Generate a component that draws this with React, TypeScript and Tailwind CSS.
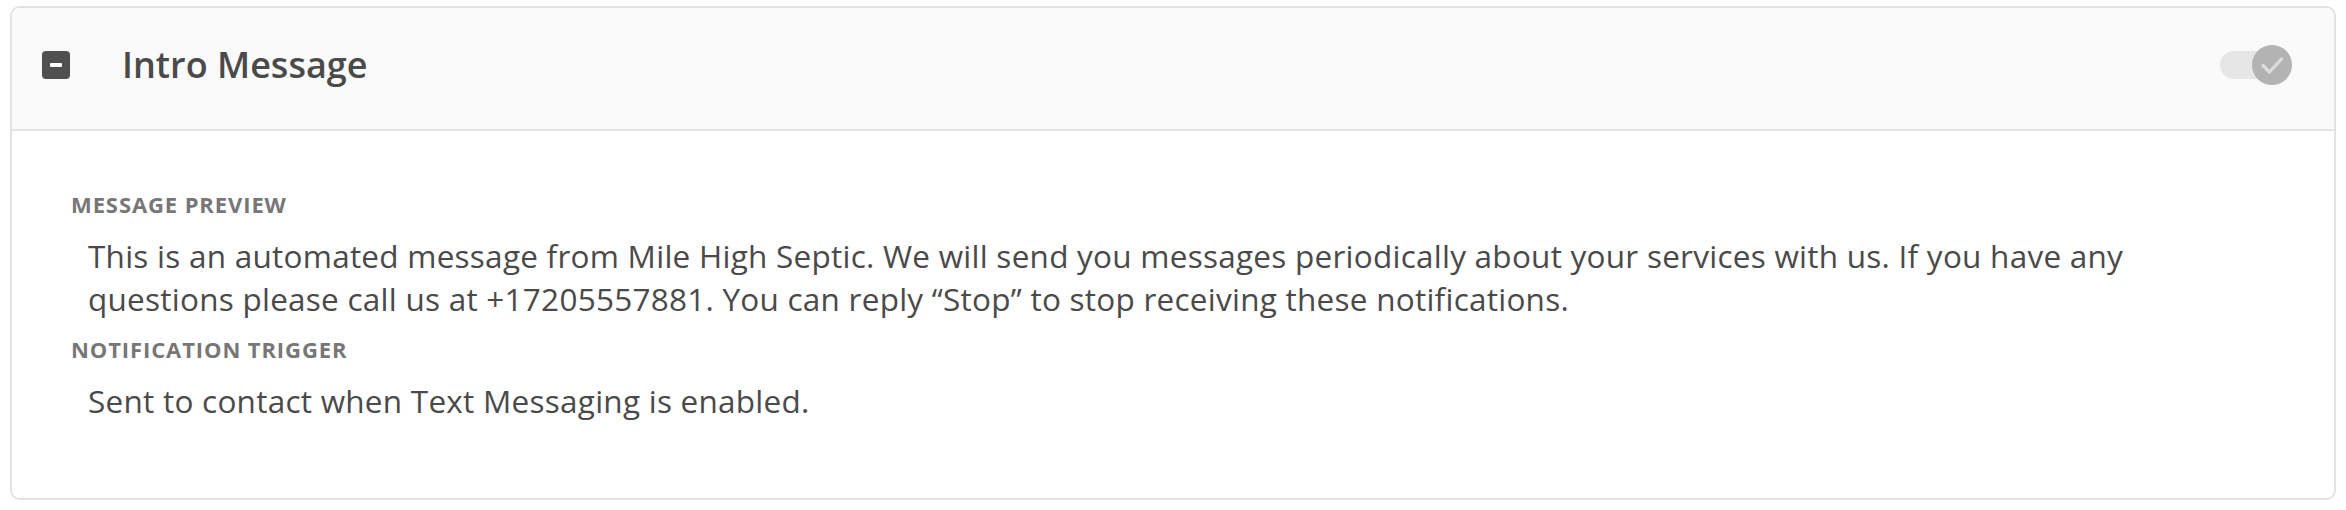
import React from "react";

export default function App() {
  return (
    <div className="w-[2346px] h-[510px] bg-white pt-[6px] px-[10px] pb-[10px]" style={{ fontFamily: '"Open Sans", "Noto Sans", sans-serif' }}>
      <div className="h-full border-2 border-[#e2e2e2] rounded-[10px] overflow-hidden flex flex-col">
        <div className="h-[123px] shrink-0 bg-[#fafafa] border-b-2 border-[#e3e3e3] flex items-center pl-[30px] pr-[42px] pb-[8px]">
          <div className="w-[28px] h-[28px] rounded-[4px] bg-[#505050] flex items-center justify-center mt-[1px]">
            <div className="w-[12px] h-[4px] rounded-[1px] bg-white" />
          </div>
          <div className="ml-[52px] text-[36px] font-semibold text-[#4a4a4a] leading-none">Intro Message</div>
          <div className="ml-auto relative w-[72px] h-[40px] flex items-center mt-[1px]">
            <div className="w-[70px] h-[28px] rounded-full bg-[#e6e6e6]" />
            <div className="absolute right-0 top-0 w-[40px] h-[40px] rounded-full bg-[#b3b3b3] flex items-center justify-center">
              <svg width="40" height="40" viewBox="0 0 40 40" fill="none">
                <path d="M11 20.5 L17.5 27 L29.5 14" stroke="#dcdcdc" strokeWidth="3.2" strokeLinecap="round" strokeLinejoin="round" />
              </svg>
            </div>
          </div>
        </div>
        <div className="flex-1 bg-white pt-[57px] pl-[59px] pr-[150px]">
          <div className="text-[22px] leading-[33px] font-bold tracking-[0.9px] text-[#777777] mb-[13px]">MESSAGE PREVIEW</div>
          <div className="pl-[17px] text-[31.5px] leading-[43px] tracking-[0.25px] text-[#4a4a4a] mb-[13px]">
            This is an automated message from Mile High Septic. We will send you messages periodically about your services with us. If you have any questions please call us at +17205557881. You can reply “Stop” to stop receiving these notifications.
          </div>
          <div className="text-[22px] leading-[33px] font-bold tracking-[0.9px] text-[#777777] mb-[13px]">NOTIFICATION TRIGGER</div>
          <div className="pl-[17px] text-[31.5px] leading-[43px] tracking-[0.25px] text-[#4a4a4a]">
            Sent to contact when Text Messaging is enabled.
          </div>
        </div>
      </div>
    </div>
  );
}
